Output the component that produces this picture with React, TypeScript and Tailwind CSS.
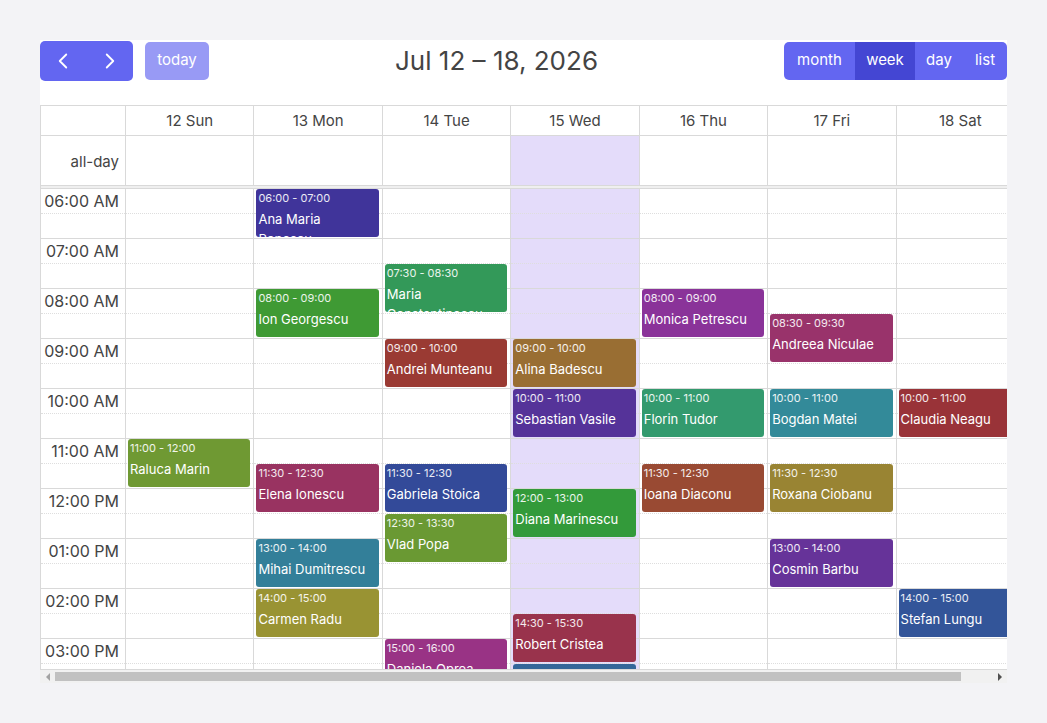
import { ChevronLeft, ChevronRight } from 'lucide-react';

const DAYS = ['12 Sun', '13 Mon', '14 Tue', '15 Wed', '16 Thu', '17 Fri', '18 Sat'];
const TODAY = 3;
const HOURS = Array.from({ length: 10 }, (_, i) => i + 6);
const START_MIN = 6 * 60;
const PX_PER_MIN = 50 / 60;

interface CalEvent {
  day: number;
  start: string;
  end: string;
  name: string;
  color: string;
}

const EVENTS: CalEvent[] = [
  { day: 0, start: '11:00', end: '12:00', name: 'Raluca Marin', color: '#6f9933' },
  { day: 1, start: '06:00', end: '07:00', name: 'Ana Maria Popescu', color: '#40349a' },
  { day: 1, start: '08:00', end: '09:00', name: 'Ion Georgescu', color: '#3f9a34' },
  { day: 1, start: '11:30', end: '12:30', name: 'Elena Ionescu', color: '#993361' },
  { day: 1, start: '13:00', end: '14:00', name: 'Mihai Dumitrescu', color: '#337f99' },
  { day: 1, start: '14:00', end: '15:00', name: 'Carmen Radu', color: '#999333' },
  { day: 2, start: '07:30', end: '08:30', name: 'Maria Constantinescu', color: '#339959' },
  { day: 2, start: '09:00', end: '10:00', name: 'Andrei Munteanu', color: '#9a3a33' },
  { day: 2, start: '11:30', end: '12:30', name: 'Gabriela Stoica', color: '#334a99' },
  { day: 2, start: '12:30', end: '13:30', name: 'Vlad Popa', color: '#6a9933' },
  { day: 2, start: '15:00', end: '16:00', name: 'Daniela Oprea', color: '#993385' },
  { day: 3, start: '09:00', end: '10:00', name: 'Alina Badescu', color: '#996e33' },
  { day: 3, start: '10:00', end: '11:00', name: 'Sebastian Vasile', color: '#553399' },
  { day: 3, start: '12:00', end: '13:00', name: 'Diana Marinescu', color: '#339a3a' },
  { day: 3, start: '14:30', end: '15:30', name: 'Robert Cristea', color: '#99334c' },
  { day: 3, start: '15:30', end: '16:30', name: 'Adrian Stan', color: '#336699' },
  { day: 4, start: '08:00', end: '09:00', name: 'Monica Petrescu', color: '#8a3399' },
  { day: 4, start: '10:00', end: '11:00', name: 'Florin Tudor', color: '#339a6e' },
  { day: 4, start: '11:30', end: '12:30', name: 'Ioana Diaconu', color: '#994a33' },
  { day: 5, start: '08:30', end: '09:30', name: 'Andreea Niculae', color: '#99336b' },
  { day: 5, start: '10:00', end: '11:00', name: 'Bogdan Matei', color: '#338a99' },
  { day: 5, start: '11:30', end: '12:30', name: 'Roxana Ciobanu', color: '#998433' },
  { day: 5, start: '13:00', end: '14:00', name: 'Cosmin Barbu', color: '#663399' },
  { day: 6, start: '10:00', end: '11:00', name: 'Claudia Neagu', color: '#993338' },
  { day: 6, start: '14:00', end: '15:00', name: 'Stefan Lungu', color: '#335599' },
];

const toMin = (t: string) => {
  const [h, m] = t.split(':').map(Number);
  return h * 60 + m;
};

const hourLabel = (h: number) => {
  const h12 = h % 12 === 0 ? 12 : h % 12;
  return `${String(h12).padStart(2, '0')}:00 ${h < 12 ? 'AM' : 'PM'}`;
};

// time axis + 7 day columns
const COLS = 'grid grid-cols-[84px_repeat(7,minmax(0,1fr))]';

function Toolbar() {
  return (
    <div className="flex h-[42px] items-center justify-between">
      <div className="flex items-center gap-3">
        <div className="flex h-10 overflow-hidden rounded-[5px] bg-[#6366f1] text-white">
          <button className="flex w-[46px] items-center justify-center" aria-label="prev">
            <ChevronLeft className="h-[26px] w-[26px]" strokeWidth={1.7} />
          </button>
          <button className="flex w-[47px] items-center justify-center" aria-label="next">
            <ChevronRight className="h-[26px] w-[26px]" strokeWidth={1.7} />
          </button>
        </div>
        <button className="h-[38px] w-16 rounded-[5px] bg-[#989af5] text-[15px] text-white">today</button>
      </div>
      <h2 className="text-[26px] font-normal leading-none text-[#444]">Jul 12 – 18, 2026</h2>
      <div className="flex h-[38px] overflow-hidden rounded-[5px] bg-[#6366f1] text-[15px] text-white">
        <button className="w-[71px]">month</button>
        <button className="w-[60px] bg-[#4446d3]">week</button>
        <button className="w-[48px]">day</button>
        <button className="w-[44px]">list</button>
      </div>
    </div>
  );
}

function EventBlock({ ev }: { ev: CalEvent }) {
  const s = toMin(ev.start);
  const e = toMin(ev.end);
  return (
    <div
      className="absolute left-[2px] right-[3px] overflow-hidden rounded-[3px] px-[2px] pt-[1px] text-white"
      style={{ top: (s - START_MIN) * PX_PER_MIN, height: (e - s) * PX_PER_MIN - 2, backgroundColor: ev.color }}
    >
      <div className="text-[11px] leading-[16px] text-white/90">
        {ev.start} - {ev.end}
      </div>
      <div className="mt-[3px] text-[13px] leading-[20px]">{ev.name}</div>
    </div>
  );
}

function Scrollbar() {
  return (
    <div className="flex h-[13px] bg-[#f1f1f1]">
      <div className="flex w-[15px] items-center justify-center">
        <span className="h-0 w-0 border-y-[4px] border-r-[4px] border-y-transparent border-r-[#a3a3a3]" />
      </div>
      <div className="flex flex-1 py-[2px]">
        <div className="w-[906px] bg-[#c1c1c1]" />
      </div>
      <div className="flex w-[15px] items-center justify-center">
        <span className="h-0 w-0 border-y-[4px] border-l-[4px] border-y-transparent border-l-[#505050]" />
      </div>
    </div>
  );
}

export default function App() {
  return (
    <div className="min-h-screen bg-[#f3f3f6] p-10 font-['Inter','Liberation_Sans',sans-serif]">
      <div className="flex h-[643px] flex-col bg-white">
        <Toolbar />
        <div className="mt-6 flex flex-1 flex-col">
          <div className="h-[565px] overflow-hidden border-b border-[#d9d9d9]">
            <div className="w-[984px] border-l border-t border-[#d9d9d9] text-[#444]">
              {/* day headers */}
              <div className={`${COLS} h-[30px] border-b border-[#d9d9d9]`}>
                <div />
                {DAYS.map((d) => (
                  <div key={d} className="flex items-center justify-center border-l border-[#d9d9d9] pt-[2px] text-[15px]">
                    {d}
                  </div>
                ))}
              </div>

              {/* all-day row */}
              <div className={`${COLS} h-[50px] border-b border-[#d9d9d9]`}>
                <div className="flex items-center justify-end pr-[6px] pt-[4px] text-[15px]">all-day</div>
                {DAYS.map((d, i) => (
                  <div key={d} className={`border-l border-[#d9d9d9] ${i === TODAY ? 'bg-[#e4dcfa]' : ''}`} />
                ))}
              </div>
              <div className="h-[3px] border-b border-[#d9d9d9] bg-[#efefef]" />

              {/* time grid */}
              <div className="relative">
                {HOURS.map((h) => (
                  <div key={h} className={`${COLS} h-[50px] border-b border-[#d9d9d9]`}>
                    <div className="h-[25px] border-b border-dotted border-[#dedede] pr-[6px] pt-[1px] text-right text-[16px] leading-[22px]">
                      {hourLabel(h)}
                    </div>
                    {DAYS.map((d, i) => (
                      <div key={d} className={`border-l border-[#d9d9d9] ${i === TODAY ? 'bg-[#e4dcfa]' : ''}`}>
                        <div className="h-[25px] border-b border-dotted border-[#dedede]" />
                      </div>
                    ))}
                  </div>
                ))}

                <div className={`${COLS} absolute inset-0`}>
                  <div />
                  {DAYS.map((d, i) => (
                    <div key={d} className="relative ml-px">
                      {EVENTS.filter((ev) => ev.day === i).map((ev) => (
                        <EventBlock key={ev.name} ev={ev} />
                      ))}
                    </div>
                  ))}
                </div>
              </div>
            </div>
          </div>
          <Scrollbar />
        </div>
      </div>
    </div>
  );
}
